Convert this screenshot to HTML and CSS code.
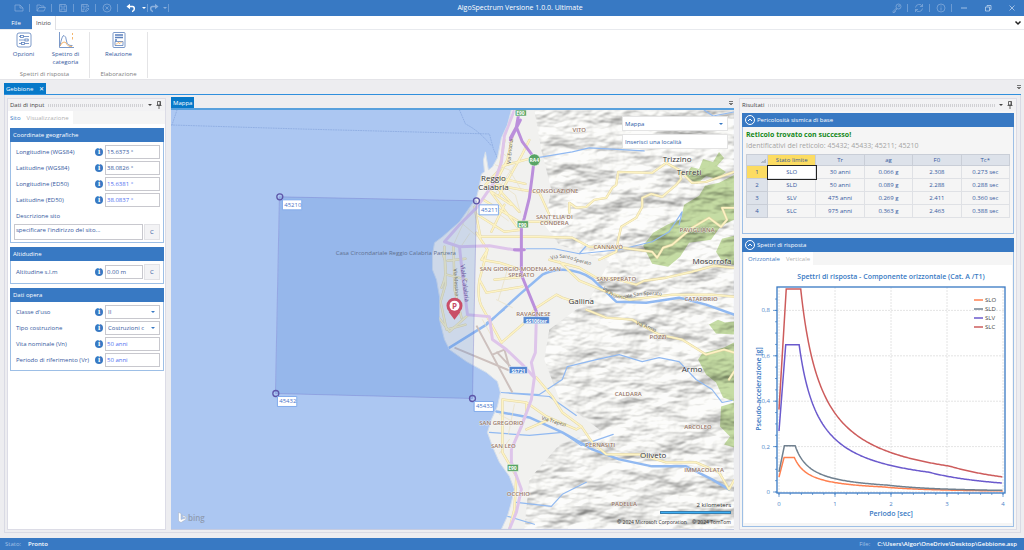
FILE: index.html
```html
<!DOCTYPE html>
<html lang="it">
  <head>
    <meta charset="UTF-8">
    <title>AlgoSpectrum</title>
    <link rel="stylesheet" href="styles.css">
  </head>
  <body>
    <header class="titlebar">
        <div class="quick">
            <button aria-label="Nuovo"><svg viewBox="0 0 10 10"><path d="M1 2h5l3 3v3H1zM6 2v3h3"/></svg></button>
            <button aria-label="Apri"><svg viewBox="0 0 10 10"><path d="M1 8V2h3l1 1h3v1.500M1 8l2-3.500h6.500L8 8z"/></svg></button>
            <button aria-label="Salva"><svg viewBox="0 0 10 10"><path d="M1.500 1.500h6l1 1v6h-7zM3 1.500v2.500h4V1.500M3 8.500V6h4v2.500"/></svg></button>
            <button aria-label="Salva con nome"><svg viewBox="0 0 10 10"><path d="M8.500 4V2.500l-1-1h-6v7h3M3 1.500V4h4V1.500M3 8.500V6h2M5.500 8.500l.5-2 2-1.500 1 1-2 2z"/></svg></button>
            <button aria-label="Chiudi file"><svg viewBox="0 0 10 10"><circle cx="5" cy="5" r="4"/><path d="M3.500 3.500l3 3M6.500 3.500l-3 3"/></svg></button>
            <button class="undo" aria-label="Annulla"><svg viewBox="0 0 10 10"><path class="thick" d="M2 3.500h4.500q2 .3 1.800 2.500T6 8.500"/><path class="solid" d="M.5 3.500L4 .8v5.400z"/></svg><i></i></button>
            <button class="redo" aria-label="Ripeti"><svg viewBox="0 0 10 10"><path class="thick" d="M8 3.500H3.500q-2 .3-1.800 2.500T4 8.500"/><path class="solid" d="M9.500 3.500L6 .8v5.400z"/></svg><i></i></button>
        </div>
        <h1>AlgoSpectrum Versione 1.0.0. Ultimate</h1>
        <div class="window-tools">
            <button aria-label="Licenza"><svg viewBox="0 0 10 10"><circle cx="6.500" cy="3.500" r="2.500"/><circle cx="7" cy="3" r=".5"/><path d="M4.500 5L1 8.500V9.500h1.500v-1h1v-1l1.500-1.500"/></svg></button>
            <button aria-label="Aggiorna"><svg viewBox="0 0 10 10"><path d="M1.500 4.500A3.700 3.700 0 0 1 8.500 3.500M8.500 1v2.500H6M8.500 5.500A3.700 3.700 0 0 1 1.500 6.500M1.500 9V6.500H4"/></svg></button>
            <button aria-label="Informazioni"><svg viewBox="0 0 10 10"><circle cx="5" cy="5" r="4"/><path d="M5 4.500v3M5 2.500v1"/></svg></button>
            <button class="win" aria-label="Riduci"><svg viewBox="0 0 10 10"><path d="M2 5h6"/></svg></button>
            <button class="win" aria-label="Ripristina"><svg viewBox="0 0 10 10"><path d="M2.500 4h4v4h-4zM4 3.500V2.500h4v4H7"/></svg></button>
            <button class="win" aria-label="Chiudi"><svg viewBox="0 0 10 10"><path d="M2.500 2.500l5 5M7.500 2.500l-5 5"/></svg></button>
        </div>
    </header>

    <nav class="ribbon-tabs">
        <button class="file">File</button>
        <button class="current">Inizio</button>
        <button class="collapse" aria-label="Comprimi"><svg viewBox="0 0 8 8"><path d="M1.500 2.500L4 5l2.500-2.500"/></svg></button>
    </nav>

    <section class="ribbon">
        <div class="ribbon-group">
            <div class="ribbon-buttons">
                <button>
                    <svg viewBox="0 0 16 16"><rect x="1" y="1" width="14" height="14" rx="2"/><path d="M3 4.500h10M3 8h10M3 11.500h10"/><rect class="knob" x="4.500" y="3.500" width="3" height="2"/><rect class="knob" x="9" y="7" width="3" height="2"/><rect class="knob" x="5.500" y="10.500" width="3" height="2"/></svg>
                    Opzioni
                </button>
                <button class="wide">
                    <svg viewBox="0 0 16 16"><path d="M1.500 0v15.500H16"/><path d="M2 14Q4 3 6 3.500t2.500 5.500 6 4.500"/><path class="orange" d="M2 14q2-4 4-4t3 2.500 5 2M14.500 1v2M14.500 5v2.500"/></svg>
                    Spettro di<br>categoria
                </button>
            </div>
            <p>Spettri di risposta</p>
        </div>
        <div class="ribbon-group small">
            <div class="ribbon-buttons">
                <button>
                    <svg viewBox="0 0 16 16"><rect x="2" y=".5" width="12" height="15" rx="1"/><path class="heavy" d="M4 3h8M4 5.500h8M4 8h2"/><path d="M4 13.500h8v-4H4z"/><path class="orange" d="M5 12.500l2-2 2 1 2-2"/></svg>
                    Relazione
                </button>
            </div>
            <p>Elaborazione</p>
        </div>
    </section>

    <div class="doc-tabs">
        <button>Gebbione <span>✕</span></button>
        <i class="menu-mark"></i>
    </div>

    <main class="workspace">
        <aside class="panel">
            <div class="panel-head"><span>Dati di input</span><i class="grip"></i><i class="arrow"></i>
                <svg class="pin" viewBox="0 0 6 8"><path d="M1.500 .5h3v3.500h-3zM.5 4.500h5M3 4.500V8M4 .5v4"/></svg>
            </div>
            <div class="sub-tabs"><button class="current">Sito</button><button>Visualizzazione</button></div>
            <form class="panel-body">
                <section class="group">
                    <h2>Coordinate geografiche</h2>
                    <div class="row"><label for="lonW">Longitudine (WGS84)</label><i class="info">i</i><input id="lonW" value="15.6373 °"></div>
                    <div class="row"><label for="latW">Latitudine (WGS84)</label><i class="info">i</i><input id="latW" value="38.0826 °"></div>
                    <div class="row"><label for="lonE">Longitudine (ED50)</label><i class="info">i</i><input id="lonE" class="computed" value="15.6381 °"></div>
                    <div class="row"><label for="latE">Latitudine (ED50)</label><i class="info">i</i><input id="latE" class="computed" value="38.0837 °"></div>
                    <div class="row"><label for="desc">Descrizione sito</label></div>
                    <div class="row site"><textarea id="desc">specificare l'indirizzo del sito...</textarea><button type="button">C</button></div>
                </section>
                <section class="group">
                    <h2>Altidudine</h2>
                    <div class="row tall"><label for="alt">Altitudine s.l.m</label><i class="info">i</i><input id="alt" value="0.00 m"><button type="button">C</button></div>
                </section>
                <section class="group">
                    <h2>Dati opera</h2>
                    <div class="row"><label for="use">Classe d'uso</label><i class="info">i</i><span class="select"><select id="use"><option>II</option></select></span></div>
                    <div class="row"><label for="type">Tipo costruzione</label><i class="info">i</i><span class="select"><select id="type"><option>Costruzioni c</option></select></span></div>
                    <div class="row"><label for="vn">Vita nominale (Vn)</label><i class="info">i</i><input id="vn" class="computed" value="50 anni"></div>
                    <div class="row"><label for="vr">Periodo di riferimento (Vr)</label><i class="info">i</i><input id="vr" class="computed" value="50 anni"></div>
                </section>
            </form>
        </aside>

        <section class="map-panel">
            <div class="map-tabs"><button>Mappa</button><i class="menu-mark"></i></div>
            <div class="map">
                <svg class="map-canvas" viewBox="171 110 564 420" preserveAspectRatio="xMinYMin slice">
                    <defs>
                        <filter id="relief" x="0" y="0" width="100%" height="100%" color-interpolation-filters="sRGB">
                            <feTurbulence type="fractalNoise" baseFrequency=".022 .045" numOctaves="4" seed="7"/>
                            <feDiffuseLighting surfaceScale="5" diffuseConstant="1.120" lighting-color="#f1f1ef">
                                <feDistantLight azimuth="240" elevation="62"/>
                            </feDiffuseLighting>
                            <feComposite in2="SourceAlpha" operator="in"/>
                        </filter>
                        <clipPath id="landClip"><use href="#land"/></clipPath>
                        <path id="santo" d="M552 260Q562 256 572 260T596 266"/>
                        <path id="prov" d="M603 289Q615 302 630 298T664 296"/>
                        <path id="armoRoad" d="M637 325Q648 328 664 336"/>
                        <path id="trapezi" d="M542 420L572 429"/>
                    </defs>
                    <rect class="sea" x="171" y="110" width="564" height="420"/>
                    <path class="ferry" d="M171 125L300 129L490 134L494 149L498 158M177 110L172 125M460 110L466 124Q480 131 492 146"/>
                    <path id="land" class="land" d="M512 110L508 125L502 138L500 148L498 158L493 167L489 170L486 152L484 160L485 172L482 174L480 186L477 198L460 222L443 237L435 243L433 255L433 270L437 280L440 297L440 320L445 340L450 350L467 362L487 373L498 382L501 393L498 407L492 420L488 433L493 447L500 463L510 477L515 490L512 503L508 517L502 530H735V110z"/>
                    <g clip-path="url(#landClip)">
                        <path class="hills" d="M535 110L542 150L552 190L545 225L560 245L610 262L590 300L550 330L545 360L560 400L600 430L560 445L530 480L525 530H735V110z"/>
                        <g class="woods">
                            <path d="M686 176l6-9 8 2 4-10 10 3 6-10 5 6-7 8 9 6-9 7-11-3-9 8z"/>
                            <path d="M735 175l-15 8-14 3-6 10-15 9-3 14-14 6-14 8-10 13 9 18 16 3 12-10 9-14 22-3 10-14 13-6z"/>
                            <path d="M735 236l-12 3-6 13 7 11 11 2z"/>
                            <path d="M710 325l9-5 7 3 9-1v13l-18-1z"/>
                            <path d="M735 343l-10 5-22 6-4 6 8 15 10 8 7 15 11 4z"/>
                            <path d="M722 407l13-4v45l-10-3 6-8-10-10z"/>
                        </g>
                        <g class="rivers">
                            <path d="M537 158L573 152L590 148L627 150L645 151M527 249L555 249L580 254L620 250L653 242L670 232L683 212L680 225M580 254L588 245"/>
                            <path class="big" d="M450 348L487 325L498 315L520 295L543 275Q557 268 573 271T597 283L617 302L647 303L680 298L707 305L735 315"/>
                            <path d="M502 393L540 395L563 380L568 367L597 360L620 355L643 362L660 358L680 362L697 380L713 390L723 403L733 401M502 393L550 397L577 416"/>
                            <path class="big" d="M497 412L530 418L563 433L593 450L620 460L653 467L687 467L713 480L730 490"/>
                            <path d="M490 433L530 436L563 433L582 446L614 435M517 503L552 507L563 495L587 483M508 517L535 525M487 323L505 310M705 110L714 116L735 112"/>
                        </g>
                        <g class="streets">
                            <g id="roads">
                                <path d="M478 215L505 232L522 230M480 237L540 237L573 238L590 247L623 248L653 252L658 258L664 248L673 245L693 228L710 218L722 227L728 220L723 208L735 208"/>
                                <path d="M570 213L570 203L577 208L587 207L595 200L607 198L613 188L617 185L619 172L653 173L667 163L680 170L693 183L707 182L735 172"/>
                                <path d="M680 172L682 179L677 185L663 197L652 194L643 198L643 207L637 218L622 227L619 240L617 252L600 260"/>
                                <path d="M550 260L580 268L597 278L615 279L637 285L645 281L667 278L693 272L715 266L735 268M560 262L580 281L607 292L630 300L673 295L713 295L735 297"/>
                                <path d="M502 343L523 325L537 308L557 295L563 298L575 302M587 310L607 318L633 320L660 335L683 340L707 355L725 350L735 353M735 372L730 380"/>
                                <path d="M537 378L553 397L563 413L582 427L593 443L607 455L640 455L667 463L697 463L720 473L730 490L735 481"/>
                                <path d="M503 400L527 403L547 417L577 430L582 427M503 400L503 453L517 477L515 510L510 530M527 403L527 413L522 427M527 430L550 420"/>
                                <path d="M477 233L488 250L480 280L487 293L523 287M488 250L482 260L500 263L522 270M480 280Q477 300 484 310L502 343M495 280L523 277M468 316L450 332L437 315"/>
                                <path d="M505 140L500 170L486 185L520 230M513 137L508 160L495 185L520 212M500 167L533 158M495 185L540 193L550 215M530 140L522 156L500 195M489 190L512 205M484 200L520 222L550 222M500 178L526 184M505 205L492 232M475 207L481 237"/>
                                <path d="M445 247L446 285L441 302L447 330L466 325M448 261L466 259M447 275L467 280M454 247L455 290L462 318M443 253Q450 270 442 288"/>
                            </g>
                        </g>
                        <use href="#roads" class="streets-fill"/>
                        <path class="urban-lines" d="M496 165l14 5 13 22M491 177l25 18 5 18M503 153l15 12M487 205l22 16M515 165l-20 30M470 210l-16 35M463 224l14 12M470 234l-8 12M497 300l16 8M508 270l-9 30M483 320l10 18M510 440l-10 14M500 415l17 9M515 405l-6 30"/>
                        <path class="airport" d="M455 348L510 371M477 326L513 393M493 355L505 350L510 368M497 352L511 367"/>
                        <g class="coast-road">
                            <path d="M515 110L505 136L502 162L495 182L477 208L460 225L445 242L460 247L490 246L520 251"/>
                            <path d="M460 247L463 275L468 315L490 317L493 340L507 350L523 365L535 378"/>
                            <path d="M537 318L536 353L532 363L535 378L532 400L522 427L512 450L512 463L522 490L517 513L510 530"/>
                        </g>
                        <path class="motorway" d="M520 110L517 127L523 142L535 158L533 175L530 198L525 218L522 228L522 275L537 312L537 320M517 127L511 138M521 120L511 140M515 250h10"/>
                    </g>
                    <path class="cell" d="M280 197L477 201L473 399L276 394z"/>

                    <g class="place-small">
                        <text x="580" y="132">VITO</text><text x="556" y="193">CONSOLAZIONE</text>
                        <text x="555" y="219">SANT'ELIA DI</text><text x="555" y="225">CONDERA</text>
                        <text x="698" y="232">PAVIGLIANA</text><text x="609" y="249">CANNAVÒ</text>
                        <text x="521" y="271">SAN GIORGIO-MODENA-SAN</text><text x="522" y="277">SPERATO</text>
                        <text x="617" y="281">SAN-SPERATO</text><text x="702" y="301">CATAFORIO</text>
                        <text x="534" y="316">RAVAGNESE</text><text x="659" y="339">POZZI</text>
                        <text x="629" y="397">CALDARA</text><text x="699" y="430">ARCOLEO</text>
                        <text x="502" y="426">SAN GREGORIO</text><text x="504" y="449">SAN LEO</text>
                        <text x="601" y="448">PERNASITI</text><text x="705" y="473">IMMACOLATA</text>
                        <text x="519" y="497">OCCHIO</text><text x="625" y="507">PADELLA</text>
                    </g>
                    <g class="place">
                        <text x="494" y="181">Reggio</text><text x="494" y="190">Calabria</text>
                        <text x="678" y="162">Trizzino</text><text x="690" y="175">Terreti</text>
                        <text x="713" y="264">Mosorrofa</text><text x="582" y="304">Gallina</text>
                        <text x="693" y="372">Armo</text><text x="654" y="459">Oliveto</text>
                    </g>
                    <g class="road-name">
                        <text><textPath href="#santo">Via Santo Sperato</textPath></text>
                        <text><textPath href="#prov">Via Provinciale San Sperato</textPath></text>
                        <text><textPath href="#armoRoad">Via Armo</textPath></text>
                        <text><textPath href="#trapezi">Via Trapezi</textPath></text>
                        <text transform="translate(511 164) rotate(-84)">Via Enotria</text>
                        <text transform="translate(454 269) rotate(86)">Via Messina</text>
                        <text class="avenue" transform="translate(461 265) rotate(83)">Viale Calabria</text>
                        <text class="jail" x="336" y="255">Casa Circondariale Reggio Calabria Panzera</text>
                    </g>
                    <g class="shield">
                        <rect class="green" x="516" y="110" width="11" height="6"/><text x="521" y="115">E90</text>
                        <circle class="green" cx="535" cy="160" r="6"/><text x="535" y="162">RA4</text>
                        <rect class="green" x="518" y="221" width="11" height="7"/><text x="523" y="227">E90</text>
                        <rect class="green" x="508" y="465" width="11" height="7"/><text x="513" y="471">E90</text>
                        <rect class="blue" x="524" y="317" width="26" height="7"/><text x="537" y="323">SS106ter</text>
                        <rect class="blue" x="510" y="367" width="18" height="7"/><text x="519" y="373">SS721</text>
                    </g>

                    <g class="marker"><path d="M449 312h12l-6 8z"/><circle cx="455" cy="306" r="8"/><circle class="hole" cx="455" cy="306" r="5"/><text x="455" y="309">P</text></g>

                    <g class="node">
                        <circle cx="280" cy="197" r="3"/><rect x="283" y="200" width="19" height="10"/><text x="293" y="207">45210</text>
                        <circle cx="477" cy="201" r="3"/><rect x="480" y="205" width="19" height="10"/><text x="490" y="212">45211</text>
                        <circle cx="473" cy="399" r="3"/><rect x="475" y="402" width="19" height="10"/><text x="485" y="409">45433</text>
                        <circle cx="276" cy="394" r="3"/><rect x="278" y="397" width="19" height="10"/><text x="288" y="404">45432</text>
                    </g>
                </svg>
                <div class="map-search">
                    <span class="select"><select aria-label="Tipo mappa"><option>Mappa</option></select></span>
                    <input aria-label="Località" value="Inserisci una località">
                </div>
                <div class="bing"><svg viewBox="0 0 9 11"><path d="M.5.500l2.500 1v6l5-1.500-3-1L4 3l4.500 2v2L3 10.500l-2.500-1.500z"/></svg>bing</div>
                <div class="scale"><span>2 kilometers</span><i></i><small>© 2024 Microsoft Corporation &nbsp; &nbsp;© 2024 TomTom</small></div>
            </div>
        </section>

        <aside class="panel results">
            <div class="panel-head"><span>Risultati</span><i class="grip"></i><i class="arrow"></i>
                <svg class="pin" viewBox="0 0 6 8"><path d="M1.500 .5h3v3.500h-3zM.5 4.500h5M3 4.500V8M4 .5v4"/></svg>
            </div>
            <section class="group hazard">
                <h2><svg viewBox="0 0 10 10"><circle cx="5" cy="5" r="4.500"/><path d="M3 6l2-2 2 2"/></svg>Pericolosità sismica di base</h2>
                <p class="success">Reticolo trovato con successo!</p>
                <p class="ids">Identificativi del reticolo: 45432; 45433; 45211; 45210</p>
                <table>
                    <thead><tr><th class="corner"></th><th class="picked">Stato limite</th><th>Tr</th><th>ag</th><th>F0</th><th>Tc*</th></tr></thead>
                    <tbody>
                        <tr><th class="picked">1</th><td class="active">SLO</td><td>30 anni</td><td>0.066 g</td><td>2.308</td><td>0.273 sec</td></tr>
                        <tr><th>2</th><td>SLD</td><td>50 anni</td><td>0.089 g</td><td>2.288</td><td>0.288 sec</td></tr>
                        <tr><th>3</th><td>SLV</td><td>475 anni</td><td>0.269 g</td><td>2.411</td><td>0.360 sec</td></tr>
                        <tr><th>4</th><td>SLC</td><td>975 anni</td><td>0.363 g</td><td>2.463</td><td>0.388 sec</td></tr>
                    </tbody>
                </table>
            </section>
            <section class="group spectra">
                <h2><svg viewBox="0 0 10 10"><circle cx="5" cy="5" r="4.500"/><path d="M3 6l2-2 2 2"/></svg>Spettri di risposta</h2>
                <div class="sub-tabs"><button class="current">Orizzontale</button><button>Verticale</button></div>
                <div class="chart">
                    <svg id="chart" viewBox="0 0 268 258"></svg>
                </div>
            </section>
        </aside>
    </main>

    <footer class="status">
        <span>Stato:</span><b>Pronto</b>
        <span class="path">File:</span><b>C:\Users\Algor\OneDrive\Desktop\Gebbione.asp</b>
    </footer>

    <script src="chart.js"></script>
  </body>
</html>
```
FILE: styles.css
```css
* {
    box-sizing: border-box;
}
body {
    margin: 0;
    min-height: 100vh;
    display: flex;
    flex-direction: column;
    background: #ededf0;
    color: #34589e;
    font: 6px/8px "Open Sans", "Noto Sans", sans-serif;
}
button, input, select, textarea {
    font: inherit;
    color: inherit;
    margin: 0;
    padding: 0;
    border: 0;
    background: none;
    border-radius: 0;
}
h1, h2, p {
    margin: 0;
    font-size: inherit;
    font-weight: normal;
}
svg {
    display: block;
    fill: none;
    stroke: currentColor;
}
svg text {
    stroke: none;
}
i {
    font-style: normal;
}

/* title bar */
.titlebar {
    height: 16px;
    display: grid;
    grid-template-columns: 1fr auto 1fr;
    align-items: center;
    background: #3879c3;
    color: #fff;
}
.titlebar h1 {
    padding-left: 16px;
    font-size: 7px;
}
.quick, .window-tools {
    display: flex;
    align-items: center;
    color: #8bb0dd;
}
.quick {
    padding-left: 8px;
}
.window-tools {
    justify-content: flex-end;
}
.quick button, .window-tools button {
    width: 22px;
    height: 8px;
    display: flex;
    align-items: center;
    justify-content: center;
    border-right: 1px solid #6c9bd3;
}
.quick svg, .window-tools svg {
    width: 10px;
    height: 10px;
    stroke-width: .7;
}
.quick .undo, .quick .redo {
    gap: 6px;
    width: 30px;
    padding-left: 7px;
}
.quick .redo {
    width: 21px;
    padding-left: 0;
    gap: 4px;
}
.quick .undo {
    color: #fff;
}
.quick i {
    border: 2px solid transparent;
    border-top-color: currentColor;
    border-bottom: 0;
}
.thick {
    stroke-width: 1.5;
}
.solid {
    fill: currentColor;
    stroke: none;
}
.window-tools .win {
    width: 24px;
    border: 0;
    color: #cddff3;
}

/* ribbon */
.ribbon-tabs {
    height: 14px;
    display: flex;
    background: #fff;
    border-bottom: 1px solid #e8eaee;
}
.ribbon-tabs .file {
    width: 32px;
    background: #3879c3;
    color: #fff;
}
.ribbon-tabs .current {
    width: 24px;
    height: 14px;
    background: #fff;
    border-right: 1px solid #e0e0e4;
    color: #444;
}
.collapse {
    margin-left: auto;
    width: 10px;
    color: #222;
}
.collapse svg {
    width: 8px;
    stroke-width: 1.5;
}
.ribbon {
    height: 50px;
    display: flex;
    padding: 2px 0 1px;
    background: #fff;
    border-bottom: 1px solid #e4e4e8;
}
.ribbon-group {
    width: 90px;
    display: flex;
    flex-direction: column;
    justify-content: space-between;
    border-right: 1px solid #e4e4e6;
    text-align: center;
    color: #808080;
}
.ribbon-group.small {
    width: 58px;
}
.ribbon-buttons {
    display: flex;
    justify-content: center;
    align-items: flex-start;
    color: #34589e;
}
.ribbon-buttons button {
    width: 42px;
}
.ribbon-buttons svg {
    width: 16px;
    height: 16px;
    margin: 0 auto 2px;
    stroke-width: .8;
    stroke: #5b80bd;
}
.ribbon-buttons .knob {
    fill: #fff;
}
.ribbon-buttons .heavy {
    stroke-width: 1.5;
}
.ribbon-buttons .orange {
    stroke: #f3a347;
}

/* document tabs */
.doc-tabs {
    height: 15px;
    display: flex;
    align-items: flex-end;
    justify-content: space-between;
    margin: 0 3px 0 4px;
    border-bottom: 1px solid #2f8fdd;
}
.doc-tabs button, .map-tabs button {
    height: 11px;
    padding: 0 2px;
    background: #0779c9;
    color: #fff;
}
.doc-tabs span {
    margin: 0 0 0 4px;
}
.menu-mark {
    width: 4px;
    height: 5px;
    margin: 0 0 4px;
    border-top: 1px solid #777;
    background: linear-gradient(#777, #777) 0 1px / 4px 1px no-repeat, linear-gradient(#777, #777) 1px 2px / 2px 1px no-repeat;
}

/* workspace */
.workspace {
    flex: 1;
    display: grid;
    grid-template-columns: 159px minmax(0, 1fr) 278px;
    gap: 5px;
    margin: 0 3px 5px 4px;
    padding: 3px 3px 2px 2px;
    border: 1px solid #d9dae4;
    border-top: 0;
}
.panel {
    display: flex;
    flex-direction: column;
    background: #fff;
    border: 1px solid #dcdce6;
}
.panel-head {
    height: 12px;
    display: flex;
    align-items: center;
    gap: 4px;
    padding: 0 3px 0 2px;
    background: #f2f2f4;
    color: #444;
}
.panel-head .grip {
    flex: 1;
    height: 3px;
    background: repeating-linear-gradient(90deg, #c8c8cc 0 1px, transparent 1px 2px);
    opacity: .8;
}
.arrow, .select::after {
    border: 2px solid transparent;
    border-top-color: currentColor;
    border-bottom: 0;
}
.pin {
    width: 6px;
    height: 8px;
    stroke-width: .8;
}
.sub-tabs {
    height: 13px;
    display: flex;
    background: linear-gradient(#fff, #fff) 0 0 / 65px 100% no-repeat #f5f5f5;
}
.sub-tabs button {
    padding: 0 4px 0 2px;
    color: #b0b0b0;
}
.sub-tabs .current {
    color: #3879c3;
}
.panel-body {
    display: flex;
    flex-direction: column;
    gap: 4px;
    padding: 4px 1px 0 2px;
}
.group {
    border: 1px solid #9dbfe6;
    padding-bottom: 2px;
}
.group h2 {
    height: 14px;
    display: flex;
    align-items: center;
    gap: 2px;
    margin: -1px -1px 2px;
    padding: 0 3px;
    background: #3879c3;
    color: #fff;
}
.group h2 svg {
    width: 10px;
}
.row {
    height: 16px;
    display: flex;
    align-items: center;
    padding: 0 3px 0 5px;
}
.row label {
    flex: 1;
    white-space: nowrap;
}
.row input, .row .select {
    width: 55px;
    height: 14px;
    margin-left: 2px;
    padding-left: 1px;
    border: 1px solid #c8c8ce;
    background: #fff;
}
.row .computed {
    color: #4f6ff0;
}
.row .select {
    padding-left: 2px;
}
.row button {
    width: 16px;
    height: 16px;
    margin-left: 1px;
    background: #f3f3f5;
    border: 1px solid #e2e2e6;
}
.row:has(button) input {
    width: 38px;
}
.row.tall {
    height: 18px;
}
.row.site {
    padding-left: 3px;
}
.row textarea {
    flex: 1;
    height: 16px;
    padding: 1px;
    border: 1px solid #c8c8ce;
    resize: none;
    overflow: hidden;
}
.info {
    width: 8px;
    height: 8px;
    border-radius: 50%;
    background: #3879c3;
    color: #fff;
    font: bold 8px/8px "Liberation Serif", serif;
    text-align: center;
}
.select {
    display: flex;
    align-items: center;
}
.select select {
    flex: 1;
    min-width: 0;
    appearance: none;
}
.select::after {
    content: "";
    margin-right: 4px;
    color: #3879c3;
}

/* map */
.map-panel {
    display: flex;
    flex-direction: column;
}
.map-tabs {
    height: 12px;
    display: flex;
    align-items: flex-end;
    justify-content: space-between;
    border-bottom: 2px solid #58a0dd;
}
.map-tabs .menu-mark {
    margin: 0 1px 2px;
}
.map {
    position: relative;
    flex: 1;
    min-height: 300px;
    overflow: hidden;
    border-bottom: 1px solid #c5cbe0;
}
.map-canvas {
    position: absolute;
    width: 100%;
    height: 100%;
    stroke-linejoin: round;
    stroke-linecap: round;
}
.sea {
    fill: #acc7f2;
    stroke: none;
}
.ferry {
    stroke: #84a4dc;
    stroke-width: .7;
    stroke-dasharray: 1 1.5;
}
.land {
    fill: #f1f1ef;
    stroke: #d5dfeb;
}
.hills {
    fill: #fff;
    stroke: none;
    filter: url(#relief);
    opacity: .75;
}
.woods {
    fill: #c5dca4;
    stroke: none;
    mix-blend-mode: multiply;
}
.rivers {
    stroke: #91b9f1;
    stroke-width: 1.2;
}
.rivers .big {
    stroke-width: 2.5;
}
.streets {
    stroke: #e3d6a4;
    stroke-width: 2.4;
}
.streets-fill {
    stroke: #fdf3c4;
    stroke-width: 1.5;
}
.urban-lines {
    stroke: #e9e1c2;
    stroke-width: .7;
}
.airport {
    stroke: #cdc1be;
    stroke-width: 2;
    stroke-linecap: butt;
}
.coast-road {
    stroke: #dec5ea;
    stroke-width: 3;
}
.motorway {
    stroke: #bb8fdb;
    stroke-width: 3;
}
.cell {
    fill: rgba(63, 120, 212, .2);
    stroke: rgba(110, 110, 200, .35);
}
.place-small {
    fill: #987868;
    font-weight: 600;
    text-anchor: middle;
}
.place {
    fill: #333;
    font-size: 8px;
    text-anchor: middle;
}
.place-small text, .place text {
    stroke: rgba(255, 255, 255, .6);
    stroke-width: 1px;
    paint-order: stroke;
}
.road-name {
    fill: #5d5d57;
    font-size: 5px;
}
.road-name .avenue {
    fill: #5c4f92;
    font-size: 6px;
}
.road-name .jail {
    fill: #60708f;
    font-size: 6px;
}
.shield text {
    fill: #fff;
    font-size: 5px;
    font-weight: bold;
    text-anchor: middle;
}
.shield rect, .shield circle {
    stroke: #fff;
    stroke-width: .5;
}
.shield .green {
    fill: #58a465;
}
.shield .blue {
    fill: #5488d2;
}
.marker {
    fill: #c94e68;
    stroke: none;
}
.marker .hole {
    fill: #fff;
}
.marker text {
    font-size: 8px;
    font-weight: bold;
    text-anchor: middle;
}
.node circle {
    stroke: #5d55a8;
    stroke-width: 1.3;
}
.node rect {
    fill: #fff;
    stroke: #83acec;
}
.node text {
    fill: #4a74c8;
    text-anchor: middle;
}
.map-search {
    position: absolute;
    top: 6px;
    right: 6px;
    width: 106px;
    display: grid;
    gap: 3px;
    color: #2d5ba6;
}
.map-search .select, .map-search input {
    height: 15px;
    padding-left: 2px;
    background: #fff;
    border: 1px solid #e4e4e4;
}
.bing {
    position: absolute;
    left: 7px;
    bottom: 6px;
    display: flex;
    align-items: center;
    gap: 1px;
    color: #8f9bb0;
    font-size: 8px;
    font-weight: 600;
}
.bing svg {
    width: 9px;
    fill: #fff;
    stroke: #9aa3b3;
    stroke-width: .4;
}
.scale {
    position: absolute;
    right: 3px;
    bottom: 3px;
    display: flex;
    flex-direction: column;
    align-items: flex-end;
    color: #333;
}
.scale i {
    width: 71px;
    height: 3px;
    margin: 2px 0 4px;
    background: #3fb0f5;
    border: 1px solid #3a7fae;
}
.scale small {
    font-size: 5px;
}

/* results */
.results {
    gap: 4px;
    padding: 0 2px 2px;
    background: #f5f5f5;
}
.results .panel-head {
    margin: 0 -2px -2px;
}
.results .group {
    padding: 0 3px;
}
.results .group h2 {
    margin: -1px -4px 0;
}
.hazard {
    height: 121px;
}
.success {
    padding: 3px 0 0;
    color: #16891b;
    font-size: 7px;
    font-weight: bold;
    line-height: 9px;
}
.results .ids {
    margin: 3px 0 4px;
    color: #a4a4a4;
    font-size: 7px;
}
table {
    width: 100%;
    table-layout: fixed;
    border-collapse: collapse;
    text-align: center;
}
th, td {
    height: 13px;
    padding: 0;
    border: 1px solid #dfe1e5;
}
th {
    background: #dde2ea;
    border-color: #c9ced7;
    font-weight: normal;
}
thead th {
    height: 11px;
}
.corner {
    width: 21px;
    background: linear-gradient(135deg, transparent 50%, #b4bac4 50%) 14px 3px / 5px 5px no-repeat #dde2ea;
}
.picked {
    background: #fcdc62;
}
.active {
    background: #fff;
    border: 0;
    outline: 1px solid #222;
}
.spectra {
    flex: 1;
    display: flex;
    flex-direction: column;
}
.results .spectra {
    padding: 0 1px 3px;
}
.results .spectra h2 {
    margin: -1px -2px 0;
}
.spectra .sub-tabs {
    padding-left: 2px;
    background-size: 69px 100%;
}
.chart {
    flex: 1;
    background: #fff;
}
.chart svg {
    width: 100%;
}
.grid {
    stroke: #ddd;
    stroke-dasharray: 2 1;
    stroke-width: .8;
}
.frame {
    stroke: #3879c3;
    stroke-width: 1.3;
}
.ticks {
    stroke: #3879c3;
    stroke-width: .7;
}
.curve {
    stroke-width: 1.5;
}
.chart-title {
    fill: #3879c3;
    font-size: 7px;
    font-weight: 600;
    text-anchor: middle;
}
.tick-label {
    fill: #4a82c8;
    text-anchor: middle;
}
.tick-label.y {
    text-anchor: end;
}
.legend {
    fill: #444;
}

/* status bar */
.status {
    height: 12px;
    display: flex;
    align-items: center;
    gap: 7px;
    padding: 0 7px 0 5px;
    background: #3879c3;
    color: #a3c1e6;
}
.status b {
    color: #fff;
    font-weight: 600;
}
.status .path {
    margin-left: auto;
}
```
FILE: chart.js
```js
const chart = document.getElementById("chart");
const LEFT = 35, BOTTOM = 227, UNIT_X = 56, UNIT_Y = 227;

// ag, F0, Tc* for each limit state
const STATES = [
    { name: "SLO", color: "#ff8050", ag: 0.066, f0: 2.308, tc: 0.273 },
    { name: "SLD", color: "#70808f", ag: 0.089, f0: 2.288, tc: 0.288 },
    { name: "SLV", color: "#6b5acd", ag: 0.269, f0: 2.411, tc: 0.360 },
    { name: "SLC", color: "#cd5c5c", ag: 0.363, f0: 2.463, tc: 0.388 }
];

function add(tag, attrs, text) {
    let node = document.createElementNS("http://www.w3.org/2000/svg", tag);
    for (let key in attrs) node.setAttribute(key, attrs[key]);
    if (text) node.textContent = text;
    chart.appendChild(node);
}

function spectrum(s, t) {
    let tb = s.tc / 3;
    let td = 4 * s.ag + 1.6;
    let top = s.ag * s.f0;
    if (t < tb) return top * (t / tb + (1 - t / tb) / s.f0);
    if (t < s.tc) return top;
    if (t < td) return top * s.tc / t;
    return top * s.tc * td / (t * t);
}

let grid = "", ticks = "";
for (let i = 0; i <= 4; i++) {
    let x = LEFT + i * UNIT_X, y = BOTTOM - i * 0.2 * UNIT_Y;
    grid += `M${x} 22V228M33 ${y}H260`;
    ticks += `M${x} 228v4M33 ${y}h-4`;
    add("text", { class: "tick-label", x: x, y: 241 }, String(i));
    add("text", { class: "tick-label y", x: 26, y: y + 2 }, String(i * 2 / 10).replace(".", ","));
}
for (let i = 0; i <= 20; i++) ticks += `M${LEFT + i * UNIT_X / 5} 228v2`;
for (let i = 0; i <= 17; i++) ticks += `M33 ${BOTTOM - i * UNIT_Y / 20}h-2`;

add("path", { class: "grid", d: grid });
add("path", { class: "ticks", d: ticks });
add("rect", { class: "frame", x: 33, y: 22, width: 228, height: 206 });

STATES.forEach((s, n) => {
    let points = [];
    [0, s.tc / 3, s.tc].forEach((t) => points.push([t, spectrum(s, t)]));
    for (let t = s.tc + 0.02; t <= 4; t += 0.02) points.push([t, spectrum(s, t)]);
    let line = points.map((p) => `${LEFT + p[0] * UNIT_X},${BOTTOM - p[1] * UNIT_Y}`).join(" ");
    add("polyline", { class: "curve", points: line, stroke: s.color });
    let y = 35 + n * 9;
    add("path", { class: "curve", d: `M230 ${y}h9`, stroke: s.color });
    add("text", { class: "legend", x: 241, y: y + 2 }, s.name);
});

add("text", { class: "chart-title", x: 147, y: 14 }, "Spettri di risposta - Componente orizzontale (Cat. A /T1)");
add("text", { class: "chart-title", x: 147, y: 251 }, "Periodo [sec]");
add("text", { class: "chart-title", transform: "translate(17 124) rotate(-90)" }, "Pseudo-accelerazione [g]");
```
